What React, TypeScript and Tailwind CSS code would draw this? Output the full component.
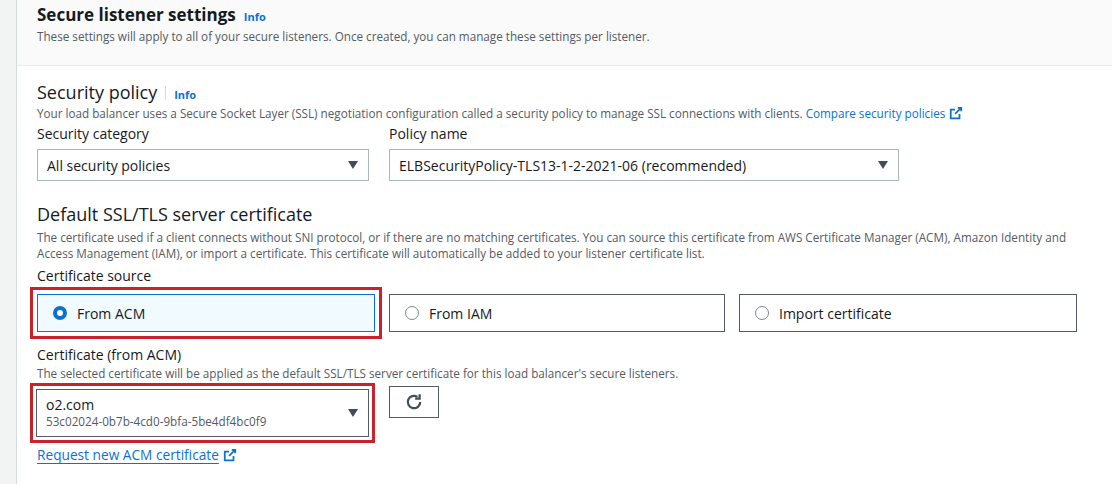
import React from "react";

const Ext = () => (
  <svg width="14" height="14" viewBox="0 0 16 16" className="inline-block ml-1 align-[-2px]" fill="none" stroke="#0972d3" strokeWidth="2">
    <path d="M10 2h4v4M14 2L7 9M12 9v5H2V4h5" />
  </svg>
);
const Caret = () => (
  <svg width="12" height="10" viewBox="0 0 12 10"><path d="M1 1h10L6 9z" fill="#414d5c" /></svg>
);
const Radio = ({ on }: { on?: boolean }) =>
  on ? (
    <span className="w-[14px] h-[14px] rounded-full border-[4px] border-[#0972d3] bg-white inline-block" />
  ) : (
    <span className="w-[14px] h-[14px] rounded-full border border-[#7d8998] bg-white inline-block" />
  );

export default function App() {
  return (
    <div className="w-[1112px] h-[484px] overflow-hidden bg-[#f2f3f3] flex text-[#16191f]" style={{ fontFamily: '"Open Sans", sans-serif' }}>
      <div className="w-[16px] shrink-0" />
      <div className="flex-1 bg-white border-l border-[#d5dbdb] flex flex-col">
        <div className="bg-[#fafafa] border-b border-[#eaeded] h-[66px] pl-[20px] pt-[2px]">
          <div className="flex items-baseline gap-2">
            <span className="text-[17px] font-bold">Secure listener settings</span>
            <span className="text-[11px] font-bold text-[#0972d3]">Info</span>
          </div>
          <div className="text-[11.7px] text-[#545b64]">These settings will apply to all of your secure listeners. Once created, you can manage these settings per listener.</div>
        </div>
        <div className="pl-[20px] pt-[13px]">
          <div className="flex items-baseline">
            <span className="text-[18px]">Security policy</span>
            <span className="w-px h-[14px] bg-[#d5dbdb] mx-[8px] self-center" />
            <span className="text-[11px] font-bold text-[#0972d3]">Info</span>
          </div>
          <div className="text-[11.7px] text-[#545b64] leading-[14px]">
            Your load balancer uses a Secure Socket Layer (SSL) negotiation configuration called a security policy to manage SSL connections with clients. <span className="text-[#0972d3]">Compare security policies</span><Ext />
          </div>
          <div className="flex gap-[20px] mt-[3px]">
            <div className="w-[332px]">
              <div className="text-[14px] mb-[5px]">Security category</div>
              <div className="h-[32px] border border-[#aab7b8] flex items-center justify-between px-[9px] text-[14px]">All security policies <Caret /></div>
            </div>
            <div className="w-[510px]">
              <div className="text-[14px] mb-[5px]">Policy name</div>
              <div className="h-[32px] border border-[#aab7b8] flex items-center justify-between px-[9px] text-[14px]">ELBSecurityPolicy-TLS13-1-2-2021-06 (recommended) <Caret /></div>
            </div>
          </div>
          <div className="text-[18px] mt-[21px] leading-[24px]">Default SSL/TLS server certificate</div>
          <div className="text-[11.7px] text-[#545b64] leading-[16px] mt-[3px] w-[1040px]">
            The certificate used if a client connects without SNI protocol, or if there are no matching certificates. You can source this certificate from AWS Certificate Manager (ACM), Amazon Identity and Access Management (IAM), or import a certificate. This certificate will automatically be added to your listener certificate list.
          </div>
          <div className="text-[14px] mt-[6px] leading-[18px]">Certificate source</div>
          <div className="flex gap-[14px] mt-[2px] items-center -ml-[7px]">
            <div className="border-[3px] border-[#c8232c] p-[4px]">
              <div className="w-[338px] h-[38px] border border-[#0972d3] bg-[#f1faff] flex items-center gap-[10px] px-[15px] text-[14px]"><Radio on />From ACM</div>
            </div>
            <div className="w-[336px] h-[38px] border border-[#545b64] flex items-center gap-[10px] px-[15px] text-[14px] -ml-[7px]"><Radio />From IAM</div>
            <div className="w-[338px] h-[38px] border border-[#545b64] flex items-center gap-[10px] px-[15px] text-[14px]"><Radio />Import certificate</div>
          </div>
          <div className="text-[14px] mt-[6px] leading-[20px]">Certificate (from ACM)</div>
          <div className="text-[11.7px] text-[#545b64] leading-[16px]">The selected certificate will be applied as the default SSL/TLS server certificate for this load balancer's secure listeners.</div>
          <div className="flex items-start gap-[14px] -ml-[7px] mt-[2px]">
            <div className="border-[3px] border-[#c8232c] p-[3px]">
              <div className="w-[333px] h-[48px] border border-[#545b64] flex items-center justify-between px-[9px]">
                <div className="leading-[17px]">
                  <div className="text-[14px]">o2.com</div>
                  <div className="text-[11.7px] text-[#545b64]">53c02024-0b7b-4cd0-9bfa-5be4df4bc0f9</div>
                </div>
                <Caret />
              </div>
            </div>
            <div className="w-[50px] h-[32px] border border-[#545b64] flex items-center justify-center mt-[3px]">
              <svg width="18" height="18" viewBox="0 0 16 16" fill="none" stroke="#414d5c" strokeWidth="2"><path d="M13.5 8A5.5 5.5 0 1 1 11 3.4" /><path d="M13 1v4H9" /></svg>
            </div>
          </div>
          <div className="mt-[2px] text-[13.7px]"><span className="text-[#0972d3] underline decoration-1 underline-offset-[3px]">Request new ACM certificate</span><Ext /></div>
        </div>
      </div>
    </div>
  );
}
